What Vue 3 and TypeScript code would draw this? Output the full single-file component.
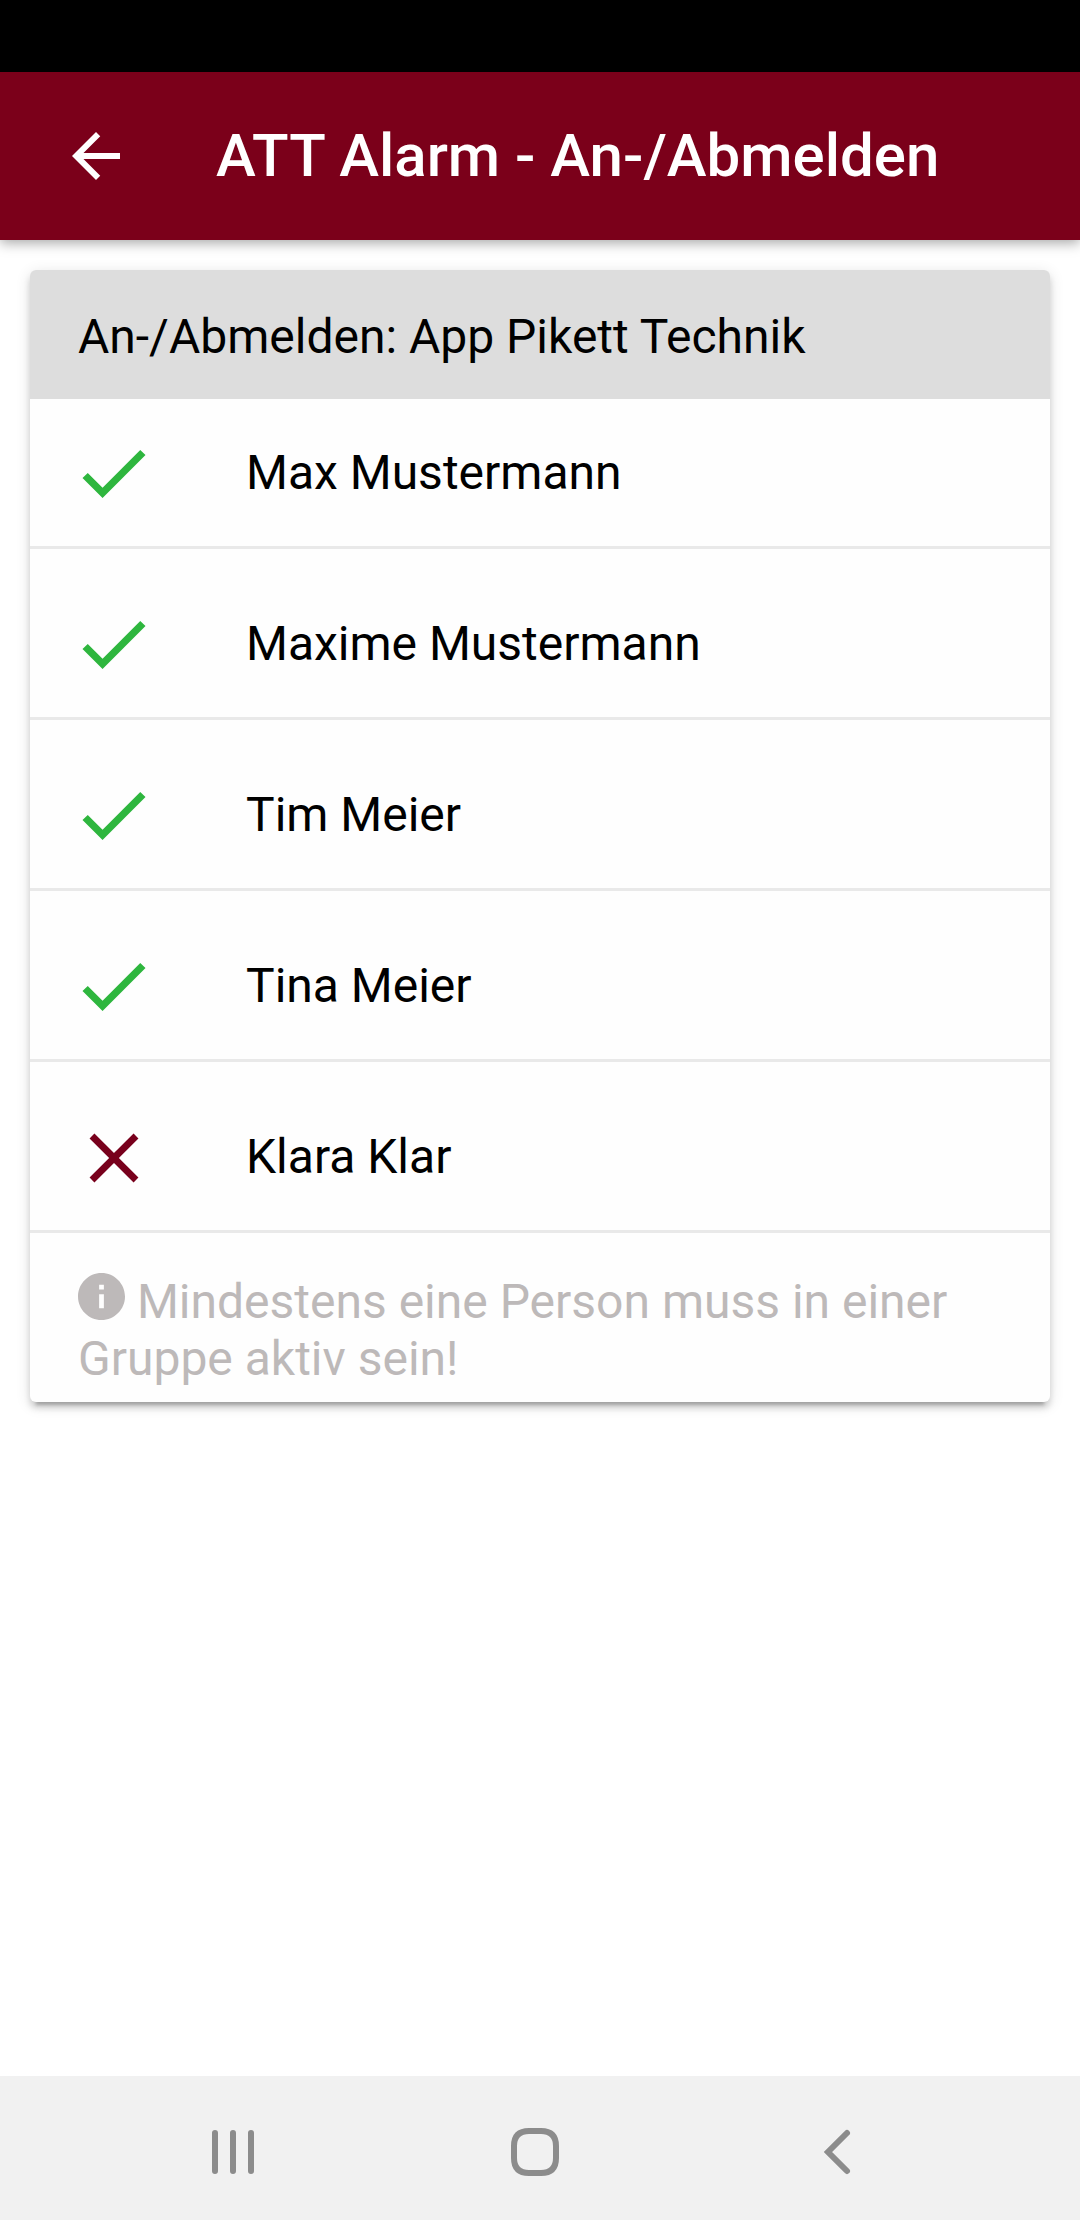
<script setup lang="ts">
import { ref } from 'vue'

interface Member {
  name: string
  active: boolean
}

const members = ref<Member[]>([
  { name: 'Max Mustermann', active: true },
  { name: 'Maxime Mustermann', active: true },
  { name: 'Tim Meier', active: true },
  { name: 'Tina Meier', active: true },
  { name: 'Klara Klar', active: false },
])

// The last active member of a group cannot sign off.
function toggle(member: Member) {
  const activeCount = members.value.filter((m) => m.active).length
  if (member.active && activeCount === 1) return
  member.active = !member.active
}
</script>

<template>
  <div class="screen">
    <div class="status-bar"></div>

    <header class="toolbar">
      <button class="icon-button" type="button" aria-label="Zurück">
        <svg class="toolbar-icon" viewBox="0 0 24 24" aria-hidden="true">
          <path d="M20 11H7.83l5.59-5.59L12 4l-8 8 8 8 1.41-1.41L7.83 13H20z" />
        </svg>
      </button>
      <h1 class="title">ATT Alarm - An-/Abmelden</h1>
    </header>

    <main class="content">
      <section class="card">
        <h2 class="card-header">An-/Abmelden: App Pikett Technik</h2>
        <ul class="members">
          <li v-for="member in members" :key="member.name" class="member">
            <button
              class="member-button"
              type="button"
              :aria-pressed="member.active"
              @click="toggle(member)"
            >
              <svg v-if="member.active" class="state active" viewBox="0 0 512 512" aria-hidden="true">
                <path d="M186.301 339.893L96 249.461l-32 30.507L186.301 402 448 140.506 416 110z" />
              </svg>
              <svg v-else class="state inactive" viewBox="0 0 512 512" aria-hidden="true">
                <path
                  d="M405 136.798L375.202 107 256 226.202 136.798 107 107 136.798 226.202 256 107 375.202 136.798 405 256 285.798 375.202 405 405 375.202 285.798 256z"
                />
              </svg>
              <span class="name">{{ member.name }}</span>
            </button>
          </li>
        </ul>
        <p class="hint">
          <svg class="hint-icon" viewBox="48 48 416 416" aria-hidden="true">
            <path
              d="M256 48C141.601 48 48 141.601 48 256s93.601 208 208 208 208-93.601 208-208S370.399 48 256 48zm21 312h-42V235h42v125zm0-166h-42v-42h42v42z"
            />
          </svg>
          Mindestens eine Person muss in einer Gruppe aktiv sein!
        </p>
      </section>
    </main>

    <nav class="system-nav" aria-label="System">
      <button class="nav-button" type="button" aria-label="Letzte Apps">
        <svg class="nav-icon" viewBox="0 0 48 48" aria-hidden="true">
          <path d="M6 5v38M24 5v38M42 5v38" />
        </svg>
      </button>
      <button class="nav-button" type="button" aria-label="Startseite">
        <svg class="nav-icon" viewBox="0 0 48 48" aria-hidden="true">
          <path d="M24 3h-6Q3 3 3 18v12q0 15 15 15h12q15 0 15-15V18Q45 3 30 3z" />
        </svg>
      </button>
      <button class="nav-button" type="button" aria-label="Zurück">
        <svg class="nav-icon" viewBox="0 0 48 48" aria-hidden="true">
          <path d="M34 5L15 24l19 19" />
        </svg>
      </button>
    </nav>
  </div>
</template>

<style>
body {
  margin: 0;
  background: #fff;
}
</style>

<style scoped>
.screen {
  display: flex;
  flex-direction: column;
  min-height: 100vh;
  font-family: Roboto, "Liberation Sans", sans-serif;
  font-size: 48px;
  color: #000;
}

button {
  border: 0;
  padding: 0;
  background: none;
  color: inherit;
  font: inherit;
  cursor: pointer;
}

svg {
  fill: currentColor;
}

.status-bar {
  height: 72px;
  background: #000;
}

.toolbar {
  display: flex;
  align-items: center;
  gap: 84px;
  height: 168px;
  padding: 0 60px;
  background: #7b001a;
  color: #fff;
  box-shadow: 0 3px 12px rgba(0, 0, 0, 0.35);
}

.icon-button {
  display: flex;
}

.toolbar-icon {
  width: 72px;
  height: 72px;
}

.title {
  margin: 0;
  font-size: 60px;
  font-weight: 500;
  line-height: 72px;
}

.content {
  flex: 1;
  padding: 30px;
}

.card {
  overflow: hidden;
  border-radius: 6px;
  background: #fefefe;
  box-shadow:
    0 9px 3px -6px rgba(0, 0, 0, 0.2),
    0 6px 6px 0 rgba(0, 0, 0, 0.14),
    0 3px 15px 0 rgba(0, 0, 0, 0.12);
}

.card-header {
  margin: 0;
  padding: 38px 48px 34px;
  background: #ddd;
  font-size: 48px;
  font-weight: 400;
  line-height: 57px;
}

.members {
  margin: 0;
  padding: 0;
  list-style: none;
}

.member {
  border-bottom: 3px solid #e9e9e9;
}

.member-button {
  display: flex;
  align-items: flex-start;
  gap: 90px;
  width: 100%;
  padding: 54px 42px 30px;
  text-align: left;
}

.member:first-child .member-button {
  padding-top: 33px;
}

.state {
  flex: none;
  width: 84px;
  height: 84px;
}

.active {
  color: #2eb63e;
}

.inactive {
  color: #78001c;
}

.name {
  line-height: 81px;
}

.hint {
  margin: 0;
  padding: 40px 48px 15px;
  color: #bdb9b9;
  line-height: 57px;
}

.hint-icon {
  width: 47px;
  height: 47px;
  vertical-align: -2px;
}

.system-nav {
  display: flex;
  box-sizing: border-box;
  height: 144px;
  padding: 8px 92px 0 82px;
  background: #f1f1f1;
  color: #8c8c8c;
}

.nav-button {
  display: flex;
  flex: 1;
  align-items: center;
  justify-content: center;
}

.nav-icon {
  width: 48px;
  height: 48px;
  fill: none;
  stroke: currentColor;
  stroke-width: 6;
  stroke-linecap: round;
}
</style>
